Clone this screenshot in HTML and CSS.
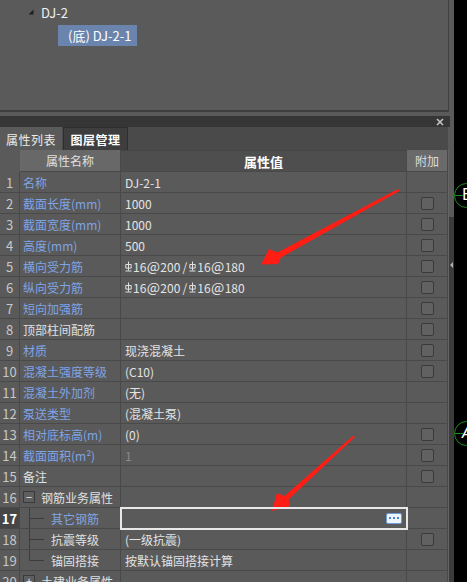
FILE: index.html
```html
<!DOCTYPE html>
<html lang="zh-CN">
<head>
<meta charset="utf-8">
<link rel="stylesheet" href="styles.css">
</head>
<body>
<div class="app">
  <div class="main">
    <div class="tree">
      <div class="node"><svg class="tri" width="6" height="6" viewBox="0 0 6 6"><polygon points="5.5,0.5 5.5,5.5 0.5,5.5" fill="#1e1e1e"/></svg><span>DJ-2</span></div>
      <div class="node child"><span class="sel">(底) DJ-2-1</span></div>
    </div>
    <div class="dock"><svg class="close" width="8" height="8" viewBox="0 0 8 8"><path d="M1 1L7 7M7 1L1 7" stroke="#c4c4c4" stroke-width="1.6"/></svg></div>
    <div class="tabs">
      <div class="tab active">属性列表</div>
      <div class="tab inactive">图层管理</div>
    </div>
    <div class="body">
      <div class="grid">
        <div class="row head">
          <div class="c0"></div>
          <div class="c1 h1">属性名称</div>
          <div class="c2 h2">属性值</div>
          <div class="c3 h3">附加</div>
        </div>
        <div class="row"><div class="c0">1</div><div class="c1 blue">名称</div><div class="c2">DJ-2-1</div><div class="c3"></div></div>
        <div class="row"><div class="c0">2</div><div class="c1 blue">截面长度(mm)</div><div class="c2">1000</div><div class="c3"><span class="cb"></span></div></div>
        <div class="row"><div class="c0">3</div><div class="c1 blue">截面宽度(mm)</div><div class="c2">1000</div><div class="c3"><span class="cb"></span></div></div>
        <div class="row"><div class="c0">4</div><div class="c1 blue">高度(mm)</div><div class="c2">500</div><div class="c3"><span class="cb"></span></div></div>
        <div class="row"><div class="c0">5</div><div class="c1 blue">横向受力筋</div><div class="c2"><svg class="rebar" width="7" height="11" viewBox="0 0 7 11"><path d="M3.5 0.5V9.5M0.8 3.5h5.4v3.6h-5.4zM0.5 10h6" stroke="#e0e0e0" stroke-width="1" fill="none"/></svg>16<span class="at">@</span>200<span class="sl">/</span><svg class="rebar" width="7" height="11" viewBox="0 0 7 11"><path d="M3.5 0.5V9.5M0.8 3.5h5.4v3.6h-5.4zM0.5 10h6" stroke="#e0e0e0" stroke-width="1" fill="none"/></svg>16<span class="at">@</span>180</div><div class="c3"><span class="cb"></span></div></div>
        <div class="row"><div class="c0">6</div><div class="c1 blue">纵向受力筋</div><div class="c2"><svg class="rebar" width="7" height="11" viewBox="0 0 7 11"><path d="M3.5 0.5V9.5M0.8 3.5h5.4v3.6h-5.4zM0.5 10h6" stroke="#e0e0e0" stroke-width="1" fill="none"/></svg>16<span class="at">@</span>200<span class="sl">/</span><svg class="rebar" width="7" height="11" viewBox="0 0 7 11"><path d="M3.5 0.5V9.5M0.8 3.5h5.4v3.6h-5.4zM0.5 10h6" stroke="#e0e0e0" stroke-width="1" fill="none"/></svg>16<span class="at">@</span>180</div><div class="c3"><span class="cb"></span></div></div>
        <div class="row"><div class="c0">7</div><div class="c1 blue">短向加强筋</div><div class="c2"></div><div class="c3"><span class="cb"></span></div></div>
        <div class="row"><div class="c0">8</div><div class="c1">顶部柱间配筋</div><div class="c2"></div><div class="c3"><span class="cb"></span></div></div>
        <div class="row"><div class="c0">9</div><div class="c1 blue">材质</div><div class="c2">现浇混凝土</div><div class="c3"><span class="cb"></span></div></div>
        <div class="row"><div class="c0">10</div><div class="c1 blue">混凝土强度等级</div><div class="c2">(C10)</div><div class="c3"><span class="cb"></span></div></div>
        <div class="row"><div class="c0">11</div><div class="c1 blue">混凝土外加剂</div><div class="c2">(无)</div><div class="c3"></div></div>
        <div class="row"><div class="c0">12</div><div class="c1 blue">泵送类型</div><div class="c2">(混凝土泵)</div><div class="c3"></div></div>
        <div class="row"><div class="c0">13</div><div class="c1 blue">相对底标高(m)</div><div class="c2">(0)</div><div class="c3"><span class="cb"></span></div></div>
        <div class="row"><div class="c0">14</div><div class="c1 blue">截面面积(m²)</div><div class="c2 dim">1</div><div class="c3"><span class="cb"></span></div></div>
        <div class="row"><div class="c0">15</div><div class="c1">备注</div><div class="c2"></div><div class="c3"><span class="cb"></span></div></div>
        <div class="row"><div class="c0">16</div><div class="c1 group"><span class="tog">−</span>钢筋业务属性</div><div class="c2"></div><div class="c3"></div></div>
        <div class="row cur"><div class="c0">17</div><div class="c1 sub blue">其它钢筋</div><div class="c2 edit"><span class="more"><i></i><i></i><i></i></span></div><div class="c3"></div></div>
        <div class="row"><div class="c0">18</div><div class="c1 sub">抗震等级</div><div class="c2">(一级抗震)</div><div class="c3"><span class="cb"></span></div></div>
        <div class="row"><div class="c0">19</div><div class="c1 sub last">锚固搭接</div><div class="c2">按默认锚固搭接计算</div><div class="c3"></div></div>
        <div class="row"><div class="c0">20</div><div class="c1 group"><span class="tog">+</span>土建业务属性</div><div class="c2"></div><div class="c3"></div></div>
      </div>
      <div class="scroll"><div class="thumb"></div><span class="collapse"></span></div>
    </div>
  </div>
  <div class="canvas">
    <div class="axis axis-b"><span>B</span></div>
    <div class="axis axis-a"><span>A</span></div>
  </div>
  <svg class="arrows" width="467" height="582" viewBox="0 0 467 582">
    <polygon points="398,189 399.5,191 281,257.5 278,264 261,264.5 269,249 277.5,252.5" fill="#ff1d14"/>
    <polygon points="353.5,435.5 355,437 288.5,499.5 290,506 272,511 277,493 284.5,496" fill="#ff1d14"/>
  </svg>
</div>
</body>
</html>
```

FILE: styles.css
```css
html, body {
  margin: 0;
  padding: 0;
}
body {
  width: 467px;
  height: 582px;
  overflow: hidden;
  background: #000;
  font-family: "Noto Sans CJK SC", "Noto Sans", sans-serif;
  font-size: 12px;
  color: #e2e2e2;
}
.app {
  position: relative;
  display: flex;
  height: 582px;
}
.main {
  width: 454px;
  flex: none;
  background: #5a5a5a;
  display: flex;
  flex-direction: column;
  overflow: hidden;
}
.tree {
  flex: none;
  width: 449px;
  height: 112px;
  box-sizing: border-box;
  border-right: 1px solid #404040;
  border-bottom: 2px solid #3e3e3e;
  padding-top: 2px;
  display: flex;
  flex-direction: column;
  gap: 2px;
}
.node {
  height: 21px;
  display: flex;
  align-items: center;
  padding-left: 28px;
  font-size: 13px;
  color: #f0f0f0;
}
.tri {
  margin-right: 7px;
  margin-top: -2px;
}
.node.child {
  padding-left: 58px;
}
.sel {
  height: 21px;
  display: flex;
  align-items: center;
  padding: 0 6px 0 10px;
  background: #6a84ae;
  color: #fff;
}
.dock {
  flex: none;
  margin-top: 4px;
  width: 450px;
  height: 11px;
  background: #363636;
  position: relative;
}
.close {
  position: absolute;
  right: 6px;
  top: 2px;
}
.tabs {
  flex: none;
  height: 23px;
  width: 448px;
  background: #4a4a4a;
  display: flex;
  align-items: stretch;
}
.tab {
  display: flex;
  align-items: center;
  justify-content: center;
  box-sizing: border-box;
  padding-top: 1px;
  letter-spacing: 0.5px;
}
.tab.active {
  width: 62px;
  background: #5a5a5a;
  color: #ececec;
}
.tab.inactive {
  width: 65px;
  margin-left: 1px;
  background: #3e3e3e;
  border: 1px solid #2f2f2f;
  border-bottom: none;
  color: #fff;
  font-weight: bold;
}
.body {
  flex: 1;
  display: flex;
  min-height: 0;
  overflow: hidden;
}
.grid {
  width: 448px;
  flex: none;
}
.row {
  display: grid;
  grid-template-columns: 20px 101px 286px 41px;
  height: 21px;
}
.row > div {
  box-sizing: border-box;
  border-right: 1px solid #494949;
  border-bottom: 1px solid #494949;
  display: flex;
  align-items: center;
  overflow: hidden;
  white-space: nowrap;
  position: relative;
}
.row .c0 {
  justify-content: center;
  color: #c8c8c8;
  font-size: 13px;
}
.row .c1 {
  padding-left: 3px;
  color: #e0e0e0;
}
.row .c2 {
  padding-left: 4px;
  color: #e4e4e4;
}
.row .c3 {
  justify-content: center;
}
.row.head {
  height: 22px;
}
.row.head .c0 {
  border-right-color: #5a5a5a;
  border-bottom-color: #5a5a5a;
}
.h1 {
  background: #686868;
  justify-content: center;
  padding-left: 0 !important;
  color: #e0e0e0 !important;
}
.h2 {
  background: #4e4e4e;
  justify-content: center;
  padding-left: 0 !important;
  color: #fff !important;
  font-weight: bold;
  font-size: 13px;
  border-top: 1px solid #444;
}
.h3 {
  background: #6a6a6a;
  color: #dcdcdc;
}
.blue {
  color: #7fa4e6 !important;
}
.dim {
  color: #8a8a8a !important;
}
.cb {
  width: 13px;
  height: 13px;
  box-sizing: border-box;
  border: 1px solid #3a3a3a;
  border-radius: 2px;
  background: #616161;
}
.rebar {
  margin-right: 1px;
  flex: none;
}
.at {
  display: inline-block;
  width: 14px;
  text-align: center;
  font-size: 14px;
}
.sl {
  display: inline-block;
  width: 9px;
  text-align: center;
}
.group {
  padding-left: 3px !important;
}
.tog {
  width: 12px;
  height: 12px;
  box-sizing: border-box;
  border: 1px solid #3a3a3a;
  background: #5e5e5e;
  color: #e8e8e8;
  font-size: 11px;
  line-height: 10px;
  text-align: center;
  margin-right: 6px;
  flex: none;
}
.sub {
  padding-left: 31px !important;
}
.sub::before {
  content: "";
  position: absolute;
  left: 9px;
  top: 0;
  bottom: -1px;
  border-left: 1px solid #3c3c3c;
}
.sub.last::before {
  bottom: 10px;
}
.sub::after {
  content: "";
  position: absolute;
  left: 9px;
  width: 15px;
  top: 10px;
  border-top: 1px solid #3c3c3c;
}
.row.cur .c0 {
  background: #464646;
  color: #fff;
  font-weight: bold;
}
.edit {
  outline: 2px solid #e8e8e8;
  outline-offset: -1px;
  justify-content: flex-end;
  padding-right: 4px;
  z-index: 1;
}
.more {
  width: 16px;
  height: 11px;
  box-sizing: border-box;
  border: 1px solid #6c9dd8;
  border-radius: 2px;
  background: #eef4fc;
  display: flex;
  align-items: center;
  justify-content: center;
  gap: 2px;
}
.more i {
  width: 2px;
  height: 2px;
  background: #4d86cc;
}
.scroll {
  width: 6px;
  flex: none;
  box-sizing: border-box;
  border-left: 1px solid #656565;
  background: #3b3b3b;
  position: relative;
}
.thumb {
  height: 67px;
  background: #5a5a5a;
}
.collapse {
  position: absolute;
  left: 1px;
  top: 112px;
  width: 0;
  height: 0;
  border-top: 3px solid transparent;
  border-bottom: 3px solid transparent;
  border-right: 3px solid #b0b0b0;
}
.canvas {
  flex: 1;
  position: relative;
  background: #000;
  overflow: hidden;
}
.axis {
  position: absolute;
  left: 0;
  width: 25px;
  height: 25px;
  box-sizing: border-box;
  border: 1px solid #1f8a1f;
  border-radius: 50%;
}
.axis::before {
  content: "";
  position: absolute;
  left: 0;
  width: 8px;
  top: 11px;
  border-top: 1px solid #1f8a1f;
}
.axis span {
  position: absolute;
  left: 7px;
  top: 2px;
  color: #fff;
  font-family: "DejaVu Sans", sans-serif;
  font-size: 15px;
  line-height: 18px;
}
.axis-b {
  top: 183px;
}
.axis-a {
  top: 421px;
}
.axis-a span {
  font-style: italic;
}
.arrows {
  position: absolute;
  left: 0;
  top: 0;
  pointer-events: none;
}
```
